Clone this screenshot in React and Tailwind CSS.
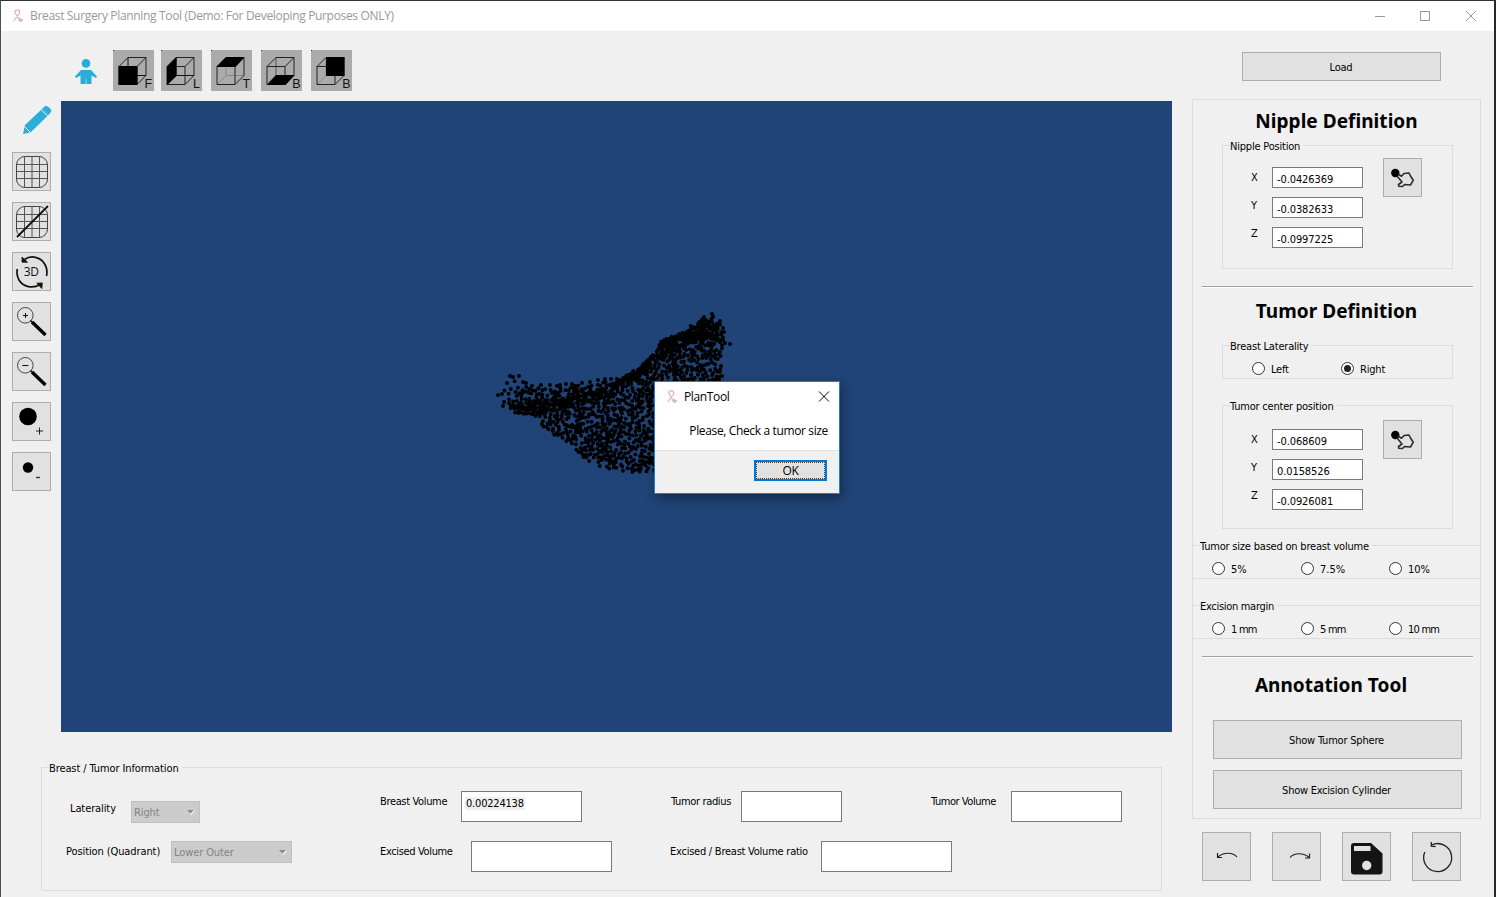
import React from "react";

const inside = (poly, x, y) => {
  let hit = false;
  for (let i = 0, j = poly.length - 1; i < poly.length; j = i++) {
    const [xi, yi] = poly[i];
    const [xj, yj] = poly[j];
    if (yi > y !== yj > y && x < ((xj - xi) * (y - yi)) / (yj - yi) + xi) hit = !hit;
  }
  return hit;
};

const BODY = [
  [524, 386], [535, 388], [545, 388], [560, 388], [575, 386], [590, 385], [605, 382], [622, 379], [634, 370],
  [645, 362], [654, 352], [661, 340], [670, 337], [685, 330], [697, 321], [704, 316], [712, 319], [720, 324],
  [724, 340], [720, 360], [721, 395], [690, 440], [660, 473], [640, 473], [622, 471], [604, 468], [590, 462],
  [576, 452], [569, 443], [556, 436], [543, 427], [540, 419], [530, 416], [514, 414], [509, 405],
];
const BAND = [
  [512, 405], [530, 401], [555, 399], [590, 392], [620, 380], [647, 361], [656, 350], [662, 340], [674, 336],
  [690, 329], [703, 318], [718, 324], [718, 338], [704, 341], [680, 348], [660, 359], [634, 381], [612, 397],
  [575, 406], [550, 412], [540, 416], [516, 413],
];
const TIP = [
  [500, 394], [505, 384], [512, 380], [527, 382], [533, 392], [528, 404], [512, 410], [503, 404],
];
const EDGE_DOTS = [
  [510, 376], [513, 377], [519, 376], [507, 383], [498, 395], [502, 394], [503, 406], [523, 382], [526, 383],
  [532, 386], [541, 385], [550, 385], [557, 386], [560, 385], [566, 384], [572, 384], [575, 386], [582, 383],
  [590, 382], [598, 380], [605, 379], [611, 379], [617, 379], [712, 314], [713, 317], [704, 317], [720, 321],
  [723, 328], [724, 332], [722, 345], [725, 343], [730, 344], [721, 366], [722, 376],
];

// Seeded dart throwing, so the cloud is the same on each render.
const buildCloud = () => {
  let seed = 20771;
  const rnd = () => {
    seed = (seed * 1664525 + 1013904223) % 4294967296;
    return seed / 4294967296;
  };
  const pts = [...EDGE_DOTS];
  const fill = (poly, gap, tries) => {
    for (let n = 0; n < tries; n++) {
      const x = 496 + rnd() * 232;
      const y = 312 + rnd() * 162;
      if (!inside(poly, x, y)) continue;
      if (pts.every(([a, b]) => (a - x) ** 2 + (b - y) ** 2 > gap * gap)) pts.push([x, y]);
    }
  };
  fill(TIP, 3.9, 6000);
  fill(BAND, 1.7, 14000);
  fill(BODY, 2.4, 6500);
  return pts.map(([x, y]) => `M${x.toFixed(1)} ${y.toFixed(1)}h0`).join("");
};
const CLOUD = buildCloud();

const Ribbon = () => (
  <svg width="12" height="14" viewBox="0 0 12 14" fill="none">
    <path d="M1.500 12 7.400 4.500C8.400 2.800 7.400.9 5.400.9S2.200 2.800 3.200 4.500L8 10.500" stroke="#e8a9bf" strokeWidth="1.200" />
    <path d="M6.500 10.500c1-1 3.500-1 4 .5-.5 2-3 2-4-.5z" fill="#d9c9c2" stroke="#a39a96" strokeWidth=".6" />
  </svg>
);

const Btn = ({ className = "", children }) => (
  <button className={`flex shrink-0 items-center justify-center border border-[#adadad] bg-[#e1e1e1] ${className}`}>
    {children}
  </button>
);

const Cube = ({ letter, face, hidden = "#111" }) => (
  <div className="h-[41px] w-[41px] bg-[#ababab]">
    <svg width="41" height="41" viewBox="0 0 41 41" fill="none">
      <rect width="1" height="1" fill="#333" />
      <path d="M15 7.500V25.500H33M15 25.500 6 34.500" stroke={hidden} strokeWidth="1" />
      <path d="M6 16.500H24V34.500H6zM15 7.500H33V25.500L24 34.500M6 16.500 15 7.500M24 16.500 33 7.500" stroke="#222" strokeWidth="1" />
      <path d={face} fill="#000" />
      <text x="35.300" y="37.500" fontSize="12.500" fill="#111" textAnchor="middle" fontFamily="Liberation Sans, sans-serif">
        {letter}
      </text>
    </svg>
  </div>
);

const Grid = ({ crossed }) => (
  <svg width="37" height="37" viewBox="0 0 37 37" fill="none">
    <rect x="3.500" y="3.500" width="31" height="31" rx="8.500" stroke="#444" />
    <path d="M11.500 4V34M19 4V34M26.500 4V34M4 11.500H34M4 18.500H34M4 25.500H34" stroke="#555" />
    {crossed && <path d="M4 34 35 3" stroke="#111" strokeWidth="1.800" />}
  </svg>
);

const Zoom = ({ plus }) => (
  <svg width="37" height="37" viewBox="0 0 37 37" fill="none">
    <circle cx="12.300" cy="12.300" r="7.800" stroke="#333" strokeWidth=".9" />
    <path d={plus ? "M10 12.500h5M12.500 10v5" : "M9.300 12.500h6"} stroke="#111" strokeWidth="1" />
    <path d="M17.500 17.500 20 20" stroke="#111" strokeWidth="1.500" />
    <path d="M19 19 32.500 32" stroke="#000" strokeWidth="3.400" />
  </svg>
);

const Hand = () => (
  <svg width="37" height="37" viewBox="0 0 37 37" fill="none">
    <circle cx="11.300" cy="14" r="4.200" fill="#000" />
    <path
      d="M14 15 17.500 17.200 20 14.500 25 14 26.500 17 29.300 21.200 26.500 26 20.500 25.500 18.500 27.500 14.800 27.300 14.500 25.500 18 23 13.200 17.200"
      stroke="#2c2c2c"
      strokeWidth="1.600"
      strokeLinejoin="round"
    />
  </svg>
);

const Group = ({ title, className = "", children }) => (
  <fieldset className={`border-[#dcdcdc] ${className}`}>
    <legend className="ml-[7px] h-[13px] pr-[3px] leading-[15px]">{title}</legend>
    {children}
  </fieldset>
);

const Radio = ({ label, checked, className = "" }) => (
  <label className={`flex h-[13px] items-center gap-[6px] ${className}`}>
    <span className="flex h-[13px] w-[13px] items-center justify-center rounded-full border border-[#333] bg-white">
      {checked && <span className="h-[7px] w-[7px] rounded-full bg-[#222]" />}
    </span>
    <span className="pt-[2px] leading-[13px]">{label}</span>
  </label>
);

const Position = ({ values, className }) => (
  <div className={`flex ${className}`}>
    <div className="flex w-[21px] flex-col pt-[6px] leading-[28px]">
      <span>X</span>
      <span>Y</span>
      <span>Z</span>
    </div>
    <div className="flex flex-col gap-[9px] pt-[9px]">
      {values.map((v) => (
        <div key={v} className="h-[21px] w-[91px] border border-[#7a7a7a] bg-white pl-1 leading-[23px] tracking-[-0.1px]">
          {v}
        </div>
      ))}
    </div>
    <Btn className="ml-5 h-[39px] w-[39px]">
      <Hand />
    </Btn>
  </div>
);

const Heading = ({ className = "", children }) => (
  <h2 className={`text-center font-['Noto_Sans',sans-serif] text-[19px] font-bold leading-6 tracking-[0.05px] ${className}`}>
    {children}
  </h2>
);

const Rule = ({ className = "" }) => (
  <div className={`mr-[7px] ml-[9px] h-[2px] border-t border-b border-t-[#a0a0a0] border-b-white ${className}`} />
);

const Field = ({ label, cell, labelWidth, box, value }) => (
  <div className={`flex ${cell}`}>
    <span className={`pt-1 leading-[13px] whitespace-nowrap ${labelWidth}`}>{label}</span>
    <div className={`h-[31px] border border-[#7a7a7a] bg-white pl-[3px] pt-[5px] tracking-[-0.2px] ${box}`}>
      {value && <span className="block w-fit bg-[#efefef] px-[1px] leading-[13px]">{value}</span>}
    </div>
  </div>
);

const Combo = ({ value, className }) => (
  <div
    className={`flex h-[22px] items-center justify-between border border-[#bfbfbf] bg-[#cccccc] pl-[2px] pr-[3px] text-[#838383] ${className}`}
  >
    <span className="pt-px leading-[13px] tracking-[-0.1px]">{value}</span>
    <svg width="10" height="6" viewBox="0 0 10 6">
      <path d="M2 1.500H9L5 6z" fill="#fff" />
      <path d="M1 1H8L4.500 4.800z" fill="#8c8c8c" />
    </svg>
  </div>
);

export default function App() {
  return (
    <div className="relative flex h-[897px] w-[1496px] flex-col overflow-hidden border-t border-r-2 border-l border-t-[#333032] border-r-[#25282b] border-l-[#4a4f50] bg-[#f0f0f0] font-['DejaVu_Sans_Condensed','DejaVu_Sans',sans-serif] text-[11px] tracking-[-0.2px] text-black">
      <header className="flex h-[30px] shrink-0 items-center bg-white pl-[11px] font-['Open_Sans',sans-serif] text-[12px] tracking-[-0.33px] text-[#999]">
        <Ribbon />
        <span className="ml-[6px] whitespace-nowrap">Breast Surgery Planning Tool (Demo: For Developing Purposes ONLY)</span>
        <svg className="mr-[17px] ml-auto" width="102" height="12" viewBox="0 0 102 12" fill="none" stroke="#999">
          <path d="M0 6.500H10M91 1 101 11M101 1 91 11" />
          <rect x="45.500" y="1.500" width="9" height="9" />
        </svg>
      </header>

      <div className="flex min-h-0 flex-1">
        <main className="w-[1171px]">
          <div className="flex h-[70px] items-start pt-[19px] pl-[74px]">
            <svg className="mt-[9px] mr-[16px]" width="22" height="26" viewBox="0 0 22 26" fill="#2badd8">
              <circle cx="11" cy="4.400" r="4.300" />
              <path d="M6 11H16L22 17.500 21 19 16.500 16.500V25H5.500V16.500L1 19 0 17.500z" />
              <path d="M11 19.500V25" stroke="#7accec" />
            </svg>
            <Cube letter="F" face="M5.500 16H24.500V35H5.500z" />
            <div className="ml-[7px] flex gap-[9px]">
              <Cube letter="L" face="M6 16.500 15.500 7V26L6 35z" />
              <Cube letter="T" face="M5.500 17 15 7H33.500L24.500 17z" hidden="#888" />
              <Cube letter="B" face="M6 35 15 25H33.500L24.500 35z" hidden="#555" />
              <Cube letter="B" face="M15 7H33.500V26H15z" hidden="#888" />
            </div>
          </div>

          <div className="flex">
            <aside className="w-[60px] pl-[11px]">
              <svg className="mt-[4px] ml-[10px]" width="30" height="30" viewBox="0 0 30 30" fill="#2badd8">
                <path d="M3 20 20.500 3.500 27 9.500 9 27 8 27.500 1 29z" />
                <path d="M20.500 3.500 23 1C25.500.5 29 3.500 29.500 6L27 9.500z" />
                <path d="M19 4.500 26 11.500M2.500 21.500 8.500 27.500" stroke="#f0f0f0" />
              </svg>
              <div className="mt-[17px] flex flex-col gap-[11px]">
                <Btn className="h-[39px] w-[39px]">
                  <Grid />
                </Btn>
                <Btn className="h-[39px] w-[39px]">
                  <Grid crossed />
                </Btn>
                <Btn className="h-[39px] w-[39px]">
                  <svg width="37" height="37" viewBox="0 0 37 37" fill="none">
                    <path d="M11.500 6.500C18 2 27.500 3.500 32 11.500C33.800 15 34.500 19 33.500 23M27 31.500C20 36 10 34 6 27C4.200 23.500 3.500 20 4.300 16" stroke="#111" strokeWidth="1.700" />
                    <path d="M9 4V9.200H14.500zM23.800 30.200 29.300 30 28.800 35.500z" fill="#111" stroke="#111" strokeWidth=".8" />
                    <text x="18.300" y="23" fontSize="12" textAnchor="middle" fill="#111" fontFamily="Open Sans, sans-serif">
                      3D
                    </text>
                  </svg>
                </Btn>
                <Btn className="h-[39px] w-[39px]">
                  <Zoom plus />
                </Btn>
                <Btn className="h-[39px] w-[39px]">
                  <Zoom />
                </Btn>
                <Btn className="h-[39px] w-[39px]">
                  <svg width="37" height="37" viewBox="0 0 37 37">
                    <circle cx="15" cy="13.500" r="8.800" />
                    <path d="M23 28H30M26.500 24.500V31.500" stroke="#222" />
                  </svg>
                </Btn>
                <Btn className="h-[39px] w-[39px]">
                  <svg width="37" height="37" viewBox="0 0 37 37">
                    <circle cx="15" cy="14.500" r="5.200" />
                    <path d="M23 24.500H27" stroke="#333" strokeWidth="1.300" />
                  </svg>
                </Btn>
              </div>
            </aside>
            <div className="h-[631px] w-[1111px] bg-[#204478]">
              <svg width="1111" height="631" viewBox="61 101 1111 631" fill="none">
                <path d={CLOUD} stroke="#000" strokeWidth="4" strokeLinecap="round" />
              </svg>
            </div>
          </div>

          <Group title="Breast / Tumor Information" className="mt-[29px] ml-10 h-[130px] w-[1121px] border tracking-[-0.1px]">
            <div className="flex h-[50px] pt-[17px]">
              <div className="flex w-[338px] pl-7">
                <span className="w-[61px] pt-[11px] leading-[13px]">Laterality</span>
                <Combo value="Right" className="mt-[10px] w-[69px]" />
              </div>
              <div className="flex tracking-[-0.35px]">
                <Field label="Breast Volume" cell="w-[291px]" labelWidth="w-[81px]" box="w-[121px]" value="0.00224138" />
                <Field label="Tumor radius" cell="w-[260px]" labelWidth="w-[70px]" box="w-[101px]" />
                <Field label="Tumor Volume" cell="tracking-[-0.45px]" labelWidth="w-[80px]" box="w-[111px]" />
              </div>
            </div>
            <div className="flex pt-[17px]">
              <div className="flex w-[338px] pl-6">
                <span className="w-[105px] pt-1 leading-[13px] whitespace-nowrap">Position (Quadrant)</span>
                <Combo value="Lower Outer" className="w-[121px]" />
              </div>
              <Field label="Excised Volume" cell="w-[290px] tracking-[-0.35px]" labelWidth="w-[91px]" box="w-[141px]" />
              <Field label="Excised / Breast Volume ratio" cell="tracking-[-0.24px]" labelWidth="w-[151px]" box="w-[131px]" />
            </div>
          </Group>
        </main>

        <section className="flex w-[309px] flex-col pt-[21px] pl-5">
          <Btn className="ml-[50px] h-[29px] w-[199px] pt-[3px] pr-px">Load</Btn>

          <div className="mt-[18px] h-[720px] w-[289px] border border-[#dcdcdc]">
            <Heading className="mt-[9px] tracking-[0.04px]">Nipple Definition</Heading>
            <Group title="Nipple Position" className="mt-[6px] ml-[29px] h-[130px] w-[231px] border">
              <Position className="mt-[6px] ml-7" values={["-0.0426369", "-0.0382633", "-0.0997225"]} />
            </Group>
            <Rule className="mt-[17px]" />
            <Heading className="mt-[11px]">Tumor Definition</Heading>
            <Group title="Breast Laterality" className="mt-4 ml-[29px] h-10 w-[231px] border">
              <div className="flex pt-[10px] pl-[29px]">
                <Radio label="Left" className="w-[89px]" />
                <Radio label="Right" checked />
              </div>
            </Group>
            <Group title="Tumor center position" className="mt-5 ml-[29px] h-[130px] w-[231px] border">
              <Position className="mt-[8px] ml-7" values={["-0.068609", "0.0158526", "-0.0926081"]} />
            </Group>
            <Group title="Tumor size based on breast volume" className="mt-[10px] h-10 border-y">
              <div className="flex pt-[10px] pl-[19px] tracking-normal">
                <Radio label="5%" className="w-[89px]" />
                <Radio label="7.5%" className="w-[88px]" />
                <Radio label="10%" />
              </div>
            </Group>
            <Group title="Excision margin" className="mt-5 h-10 border-y tracking-[-0.3px]">
              <div className="flex pt-[10px] pl-[19px] tracking-[-0.75px]">
                <Radio label="1 mm" className="w-[89px]" />
                <Radio label="5 mm" className="w-[88px]" />
                <Radio label="10 mm" />
              </div>
            </Group>
            <Rule className="mt-[17px]" />
            <Heading className="mt-[15px] pr-[11px]">Annotation Tool</Heading>
            <Btn className="mt-[23px] ml-5 h-[39px] w-[249px] pt-[3px] pr-[2px]">Show Tumor Sphere</Btn>
            <Btn className="mt-[11px] ml-5 h-[39px] w-[249px] pt-[3px] pr-[2px] tracking-[-0.25px]">Show Excision Cylinder</Btn>
          </div>

          <div className="mt-[13px] ml-[10px] flex gap-[21px]">
            <Btn className="h-[49px] w-[49px]">
              <svg width="47" height="47" viewBox="0 0 47 47" fill="none" stroke="#222">
                <path d="M15 24C20 19 30 19 34 24M14.500 20V24.500H19" strokeWidth="1.200" />
              </svg>
            </Btn>
            <Btn className="h-[49px] w-[49px]">
              <svg width="47" height="47" viewBox="0 0 47 47" fill="none" stroke="#222">
                <path d="M17 24.500C21 19.500 31 19.500 36 24.500M36.500 20.500V25H32" strokeWidth="1.200" />
              </svg>
            </Btn>
            <Btn className="h-[49px] w-[49px]">
              <svg width="47" height="47" viewBox="0 0 47 47">
                <path d="M11 10H28L39.500 20.500V38.500Q39.500 41.500 36.500 41.500H11Q8 41.500 8 38.500V13Q8 10 11 10z" fill="#141414" />
                <rect x="11" y="13" width="16.500" height="5" fill="#e1e1e1" />
                <circle cx="23.700" cy="32.500" r="4.700" fill="#e1e1e1" />
              </svg>
            </Btn>
            <Btn className="h-[49px] w-[49px]">
              <svg width="47" height="47" viewBox="0 0 47 47" fill="none" stroke="#222">
                <path d="M11.800 19A14 14 0 1 0 18.500 12M18.300 9V13.200L22.500 13.500" strokeWidth="1.300" />
              </svg>
            </Btn>
          </div>
        </section>
      </div>

      <div
        role="dialog"
        className="absolute top-[380px] left-[653px] flex h-[113px] w-[186px] flex-col border border-[#1b7fd4] bg-white font-['Open_Sans',sans-serif] text-[12px] tracking-[-0.36px] shadow-[2px_4px_10px_rgba(0,0,0,0.4)]"
      >
        <div className="flex h-[29px] items-center pl-[11px] pr-[9px]">
          <Ribbon />
          <span className="ml-[6px]">PlanTool</span>
          <svg className="ml-auto" width="12" height="12" viewBox="0 0 12 12" stroke="#000">
            <path d="M1 .5 11 10.500M11 .5 1 10.500" />
          </svg>
        </div>
        <p className="flex h-[39px] items-center justify-end pr-[11px] whitespace-nowrap">Please, Check a tumor size</p>
        <div className="flex flex-1 items-start justify-end border-t border-[#dfdfdf] bg-[#f0f0f0] pt-[9px] pr-3">
          <button className="h-[21px] w-[73px] border-2 border-[#0078d7] bg-[#e1e1e1]">
            <span className="flex h-full items-center justify-center border border-dotted border-black/70">OK</span>
          </button>
        </div>
      </div>
    </div>
  );
}
